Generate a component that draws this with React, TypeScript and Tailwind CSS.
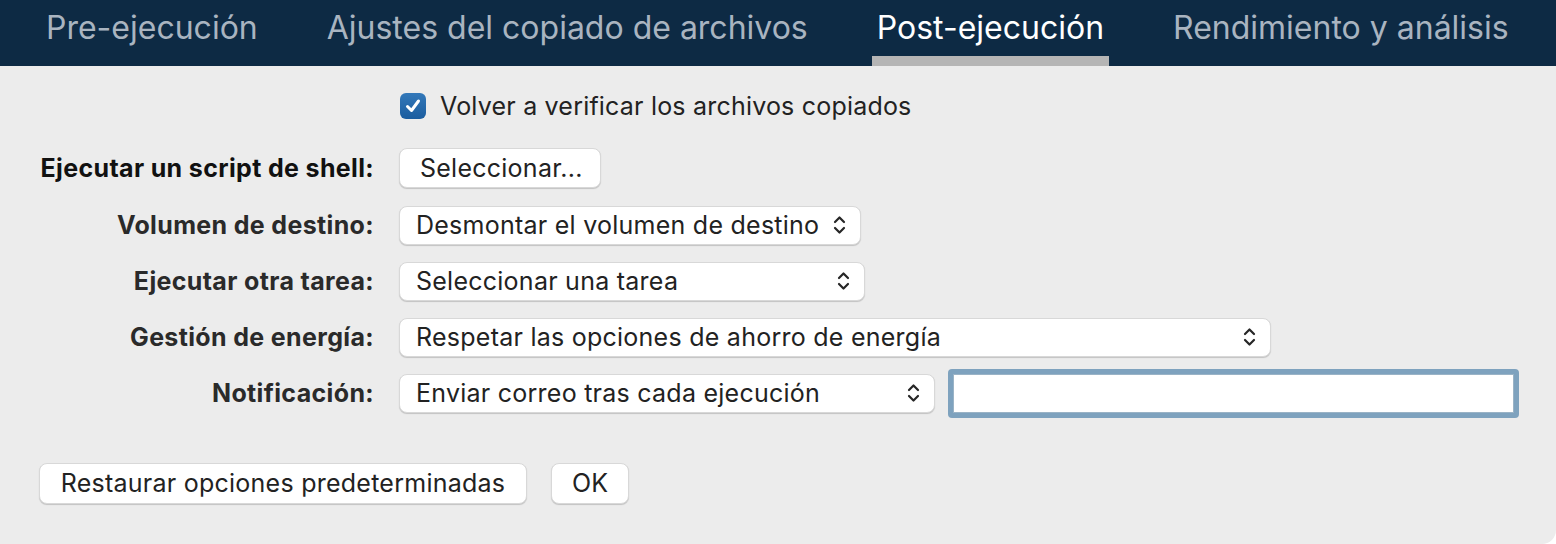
import type React from "react"

const tabs = ["Pre-ejecución", "Ajustes del copiado de archivos", "Post-ejecución", "Rendimiento y análisis"]

function Chevrons() {
  return (
    <svg width="13" height="22" viewBox="0 0 13 22" fill="none" className="shrink-0">
      <path d="M2 8 L6.5 3.5 L11 8" stroke="#262626" strokeWidth="2.2" strokeLinecap="round" strokeLinejoin="round" />
      <path d="M2 14 L6.5 18.5 L11 14" stroke="#262626" strokeWidth="2.2" strokeLinecap="round" strokeLinejoin="round" />
    </svg>
  )
}

function Popup({ label, width }: { label: string; width: string }) {
  return (
    <div
      className={`${width} h-[39px] flex items-center justify-between pl-[16px] pr-[14px] bg-white rounded-[8px] border border-[#d8d8d8] shadow-[0_1px_1px_rgba(0,0,0,0.18)] text-[25px] tracking-[0.25px] text-[#222]`}
    >
      <span className="whitespace-nowrap pt-[1px]">{label}</span>
      <Chevrons />
    </div>
  )
}

function Button({ children, className = "" }: { children: React.ReactNode; className?: string }) {
  return (
    <button
      className={`h-[40px] px-[20px] bg-white rounded-[8px] border border-[#d8d8d8] shadow-[0_1px_1px_rgba(0,0,0,0.18)] text-[25px] tracking-[0.25px] text-[#222] leading-none ${className}`}
    >
      {children}
    </button>
  )
}

function Row({ label, children, tall = false, bold = false }: { label: string; children: React.ReactNode; tall?: boolean; bold?: boolean }) {
  return (
    <div className={`flex items-center ${tall ? "h-[58px]" : "h-[56px]"}`}>
      <div
        className={`w-[374px] text-right text-[25px] tracking-[0.35px] font-bold whitespace-nowrap pt-[1px] ${bold ? "text-[#111]" : "text-[#2a2a2a]"}`}
      >
        {label}
      </div>
      <div className="ml-[25px] flex items-center">{children}</div>
    </div>
  )
}

export default function App() {
  return (
    <div
      className="w-[1556px] h-[544px] bg-[#ececec] overflow-hidden rounded-br-[14px]"
      style={{ fontFamily: "Inter, 'Liberation Sans', sans-serif" }}
    >
      <div className="h-[66px] bg-[#0d2a44] flex gap-[59px] pl-[41px]">
        {tabs.map((t, i) => (
          <div key={t} className="relative h-full px-[5px]">
            <div
              className={`pt-[8px] leading-[40px] text-[32px] whitespace-nowrap ${i === 2 ? "text-white" : "text-[#a9b4c0]"}`}
            >
              {t}
            </div>
            {i === 2 && <div className="absolute left-0 right-0 bottom-0 h-[10px] bg-[#b5b5b5]" />}
          </div>
        ))}
      </div>

      <div className="pt-[26px]">
        <div className="h-[28px] flex items-center pl-[400px]">
          <div className="w-[26px] h-[26px] rounded-[6px] bg-gradient-to-b from-[#3378b9] to-[#1b5d9f] flex items-center justify-center">
            <svg width="18" height="18" viewBox="0 0 18 18" fill="none">
              <path d="M3.5 9.5 L7.5 13.5 L14.5 4" stroke="white" strokeWidth="3" strokeLinecap="round" strokeLinejoin="round" />
            </svg>
          </div>
          <span className="ml-[14px] text-[25px] tracking-[0.2px] text-[#222] whitespace-nowrap pt-[1px]">
            Volver a verificar los archivos copiados
          </span>
        </div>

        <div className="mt-[19px]">
          <Row label="Ejecutar un script de shell:" tall bold>
            <Button className="w-[202px] h-[39px]">Seleccionar...</Button>
          </Row>
          <Row label="Volumen de destino:">
            <Popup label="Desmontar el volumen de destino" width="w-[462px]" />
          </Row>
          <Row label="Ejecutar otra tarea:">
            <Popup label="Seleccionar una tarea" width="w-[466px]" />
          </Row>
          <Row label="Gestión de energía:">
            <Popup label="Respetar las opciones de ahorro de energía" width="w-[872px]" />
          </Row>
          <Row label="Notificación:">
            <Popup label="Enviar correo tras cada ejecución" width="w-[536px]" />
            <div className="ml-[13px] w-[571px] h-[49px] rounded-[4px] bg-[#7ea2be] p-[5px]">
              <div className="w-full h-full bg-white border border-[#9ab3c6]" />
            </div>
          </Row>
        </div>

        <div className="mt-[42px] pl-[39px] flex gap-[24px]">
          <Button className="w-[488px] h-[41px]">Restaurar opciones predeterminadas</Button>
          <Button className="w-[78px] h-[41px] px-0">OK</Button>
        </div>
      </div>
    </div>
  )
}
